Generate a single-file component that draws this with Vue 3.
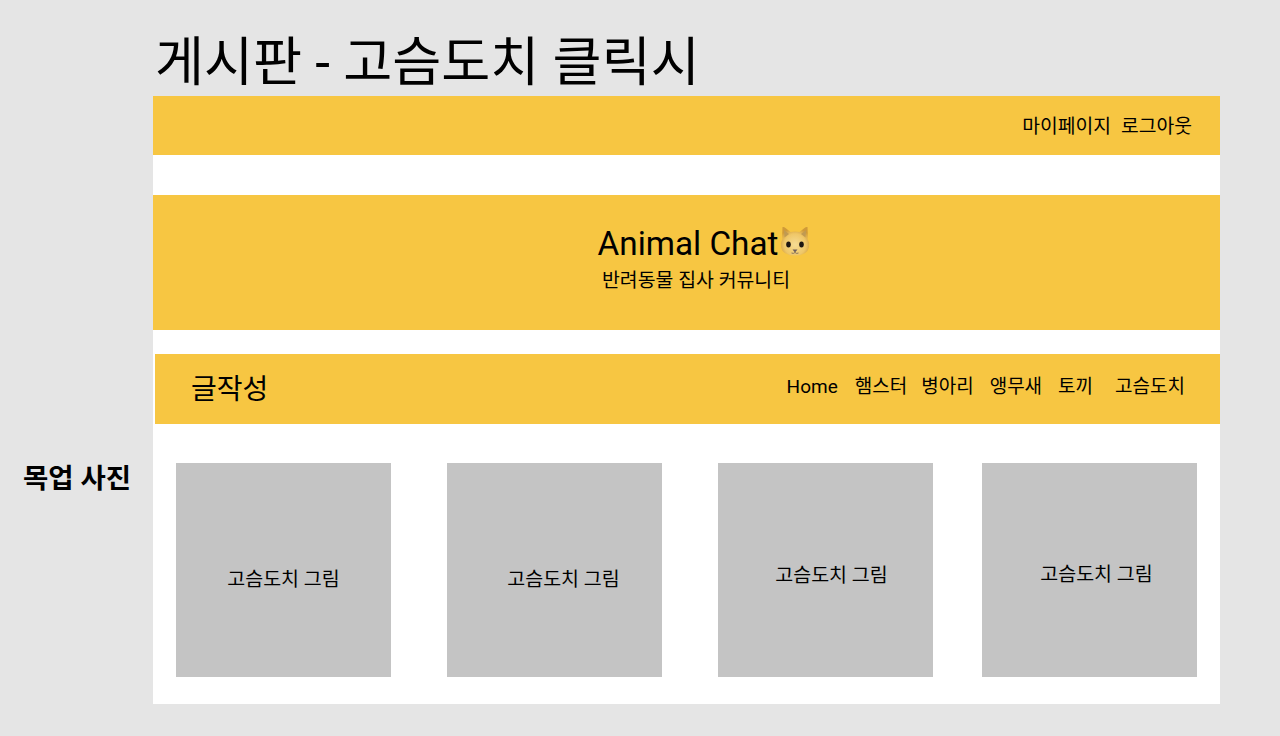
<script setup>
const links = [
  { label: 'Home', cls: 'l-home' },
  { label: '햄스터', cls: 'l-a' },
  { label: '병아리', cls: 'l-b' },
  { label: '앵무새', cls: 'l-c' },
  { label: '토끼', cls: 'l-d' },
  { label: '고슴도치', cls: 'l-e' }
]
const cards = ['c1', 'c2', 'c3', 'c4']
</script>

<template>
  <div class="page">
    <div class="side"><span class="mock">목업 사진</span></div>
    <div class="main">
      <h1 class="title">게시판 - 고슴도치 클릭시</h1>
      <div class="frame">
        <div class="topbar">
          <span>마이페이지</span>
          <span>로그아웃</span>
        </div>
        <div class="hero">
          <div class="brand">
            <span>Animal Chat</span>
            <svg class="cat" viewBox="0 0 30 30" aria-hidden="true">
              <defs>
                <radialGradient id="catFace" cx="50%" cy="62%" r="58%">
                  <stop offset="0%" stop-color="#f6dc94" />
                  <stop offset="65%" stop-color="#efc768" />
                  <stop offset="100%" stop-color="#cf9a38" />
                </radialGradient>
              </defs>
              <path d="M2.500 1 Q4 0.500 5.500 2 L10.500 6 Q15 5 19.500 6 L24.500 2 Q26 0.500 27.500 1 Q28 7 27.500 13 Q30 17 29 21 Q27.500 29.500 15 29.500 Q2.500 29.500 1 21 Q0 17 2.500 13 Q2 7 2.500 1Z" fill="url(#catFace)" />
              <path d="M4 4 L9 8 L4.500 11.500Z" fill="#c09a52" />
              <path d="M26 4 L21 8 L25.500 11.500Z" fill="#c09a52" />
              <ellipse cx="8.500" cy="18.500" rx="2.300" ry="3" fill="#1d1712" />
              <ellipse cx="21.500" cy="18.500" rx="2.300" ry="3" fill="#1d1712" />
              <path d="M12.500 23.500 H17.500 L15 26.500Z" fill="#6e5f5a" />
              <path d="M11.500 27 Q13.500 28 15 26.500 Q16.500 28 18.500 27" fill="none" stroke="#6e5f5a" stroke-width="0.800" />
            </svg>
          </div>
          <div class="sub">반려동물 집사 커뮤니티</div>
        </div>
        <div class="nav">
          <span class="write">글작성</span>
          <div class="links">
            <span v-for="l in links" :key="l.label" :class="l.cls">{{ l.label }}</span>
          </div>
        </div>
        <div class="cards">
          <div v-for="c in cards" :key="c" class="card" :class="c">
            <span>고슴도치 그림</span>
          </div>
        </div>
      </div>
    </div>
  </div>
</template>

<style>
html, body { margin: 0; background: #e5e5e5; }
</style>

<style scoped>
.page {
  display: flex;
  width: 1280px;
  height: 736px;
  overflow: hidden;
  background: #e5e5e5;
  color: #000;
  font-family: Roboto, "Noto Sans CJK KR", sans-serif;
}
.side {
  width: 153px;
  padding-top: 460px;
  box-sizing: border-box;
  text-align: right;
  padding-right: 22px;
}
.mock {
  font-size: 27.500px;
  font-weight: 700;
  line-height: 38px;
  white-space: nowrap;
}
.main { width: 1067px; }
.title {
  margin: 0;
  height: 96px;
  padding: 27px 0 0 2px;
  box-sizing: border-box;
  font-size: 53.300px;
  line-height: 72px;
  font-weight: 400;
  white-space: nowrap;
}
.frame {
  height: 608px;
  background: #fff;
  display: flex;
  flex-direction: column;
}
.topbar {
  height: 59px;
  background: #f7c642;
  display: flex;
  justify-content: flex-end;
  align-items: center;
  gap: 10px;
  padding: 0 28px 2px 0;
  box-sizing: border-box;
  font-size: 19.300px;
}
.hero {
  margin-top: 40px;
  height: 135px;
  background: #f7c642;
  display: flex;
  flex-direction: column;
  align-items: center;
  padding-top: 29px;
  box-sizing: border-box;
}
.brand {
  display: flex;
  align-items: center;
  font-size: 33.300px;
  line-height: 40px;
  margin-left: 35px;
}
.cat { width: 30px; height: 30px; margin: -7px 0 0 2px; }
.sub {
  font-size: 19.400px;
  line-height: 24px;
  margin: 5px 0 0 19px;
}
.nav {
  margin: 24px 0 0 2px;
  height: 70px;
  background: #f7c642;
  display: flex;
  justify-content: space-between;
  align-items: center;
  padding: 0 35px 0 36px;
  box-sizing: border-box;
}
.write { font-size: 28px; margin-bottom: 5px; }
.links {
  display: flex;
  align-items: baseline;
  font-size: 19px;
  margin-bottom: 10px;
}
.l-a { margin-left: 17px; }
.l-b { margin-left: 14px; }
.l-c { margin-left: 16px; }
.l-d { margin-left: 16px; }
.l-e { margin-left: 22px; }
.cards {
  display: flex;
  padding: 39px 0 0 23px;
}
.card {
  width: 215px;
  height: 214px;
  background: #c4c4c4;
  display: flex;
  align-items: center;
  justify-content: center;
  font-size: 19.500px;
}
.c2, .c3 { margin-left: 56px; }
.c4 { margin-left: 49px; }
.c1 span { margin-top: 14px; }
.c2 span { margin-left: 18px; margin-top: 14px; }
.c3 span { margin-left: 12px; margin-top: 6px; }
.c4 span { margin-left: 14px; margin-top: 4px; }
</style>
